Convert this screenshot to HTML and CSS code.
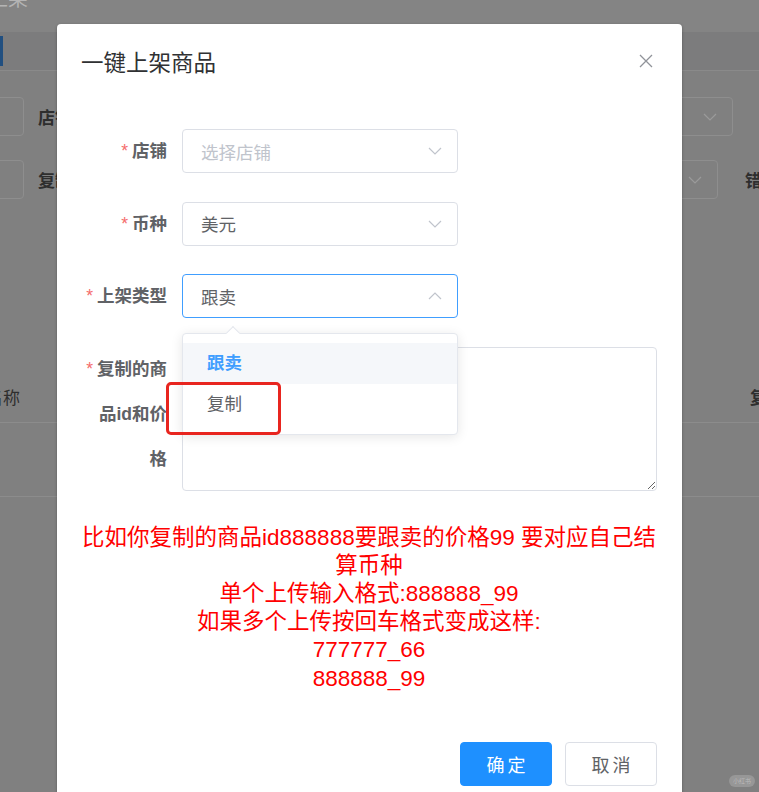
FILE: index.html
```html
<!DOCTYPE html>
<html lang="zh-CN">
<head>
<meta charset="utf-8">
<title>一键上架商品</title>
<link rel="stylesheet" href="styles.css">
</head>
<body>
<div class="page">
  <div class="bg">
    <div class="bg-title"><span class="bg-title-text">上架</span></div>
    <div class="bg-tabs"><span class="bg-tab-active"></span></div>
    <div class="bg-row bg-row1">
      <div class="bg-input"></div>
      <span class="bg-label">店铺</span>
      <div class="bg-select bg-select1">
        <svg class="chev" width="14" height="8" viewBox="0 0 14 8"><polyline points="1,1 7,7 13,1" fill="none" stroke="#9a9a9a" stroke-width="1.2"/></svg>
      </div>
    </div>
    <div class="bg-row bg-row2">
      <div class="bg-input"></div>
      <span class="bg-label">复制</span>
      <div class="bg-select bg-select2">
        <svg class="chev" width="14" height="8" viewBox="0 0 14 8"><polyline points="1,1 7,7 13,1" fill="none" stroke="#9a9a9a" stroke-width="1.2"/></svg>
      </div>
      <span class="bg-label bg-label-err">错误</span>
    </div>
    <div class="bg-table">
      <div class="bg-th"><span class="bg-th-name">名称</span><span class="bg-th-copy">复制</span></div>
      <div class="bg-tr"></div>
    </div>
  </div>

  <div class="modal">
    <div class="modal-header">
      <span class="modal-title">一键上架商品</span>
      <button class="modal-close" aria-label="关闭">
        <svg width="14" height="14" viewBox="0 0 14 14"><path d="M1 1 L13 13 M13 1 L1 13" stroke="#909399" stroke-width="1.3" fill="none"/></svg>
      </button>
    </div>
    <div class="modal-body">
      <div class="form-item">
        <label class="form-label required">店铺</label>
        <div class="select">
          <span class="placeholder">选择店铺</span>
          <svg class="arrow" width="14" height="8" viewBox="0 0 14 8"><polyline points="1,1 7,7 13,1" fill="none" stroke="#c0c4cc" stroke-width="1.2"/></svg>
        </div>
      </div>
      <div class="form-item">
        <label class="form-label required">币种</label>
        <div class="select">
          <span class="value">美元</span>
          <svg class="arrow" width="14" height="8" viewBox="0 0 14 8"><polyline points="1,1 7,7 13,1" fill="none" stroke="#c0c4cc" stroke-width="1.2"/></svg>
        </div>
      </div>
      <div class="form-item">
        <label class="form-label required">上架类型</label>
        <div class="select is-focus">
          <span class="value">跟卖</span>
          <svg class="arrow" width="14" height="8" viewBox="0 0 14 8"><polyline points="1,7 7,1 13,7" fill="none" stroke="#c0c4cc" stroke-width="1.2"/></svg>
          <div class="dropdown">
            <span class="dropdown-arrow"></span>
            <div class="option selected">跟卖</div>
            <div class="option">复制</div>
          </div>
        </div>
      </div>
      <div class="form-item form-item-last">
        <label class="form-label form-label-multi required">复制的商<br>品id和价<br>格</label>
        <textarea class="textarea"></textarea>
      </div>
      <div class="hint">
        比如你复制的商品id888888要跟卖的价格99 要对应自己结算币种<br>
        单个上传输入格式:888888_99<br>
        如果多个上传按回车格式变成这样:<br>
        777777_66<br>
        888888_99
      </div>
    </div>
    <div class="modal-footer">
      <button class="btn btn-primary">确定</button>
      <button class="btn btn-default">取消</button>
    </div>
    <div class="annotation"></div>
  </div>

  <div class="watermark">小红书</div>
</div>
</body>
</html>
```

FILE: styles.css
```css
* { box-sizing: border-box; }
html, body { margin: 0; padding: 0; }
body {
  width: 759px;
  height: 792px;
  overflow: hidden;
  font-family: "Liberation Sans", "Noto Sans CJK SC", sans-serif;
}
.page {
  position: relative;
  width: 759px;
  height: 792px;
  overflow: hidden;
  background: #808080;
}

/* ---------- background page (already dimmed) ---------- */
.bg { width: 759px; }
.bg-title {
  height: 32px;
  background: #848484;
  overflow: hidden;
}
.bg-title-text {
  display: block;
  margin: -14px 0 0 -12px;
  font-size: 20px;
  line-height: 26px;
  color: #b4b4b4;
}
.bg-tabs {
  height: 39px;
  background: #7c7c7d;
  border-bottom: 1px solid #8a8a8a;
  display: flex;
  align-items: center;
}
.bg-tab-active {
  width: 3px;
  height: 30px;
  background: #214f80;
}
.bg-row {
  display: flex;
  align-items: center;
  height: 39px;
  width: 900px;
}
.bg-row > * { flex: none; }
.bg-row1 { margin-top: 26px; }
.bg-row2 { margin-top: 24px; }
.bg-input {
  margin-left: -20px;
  width: 44px;
  height: 39px;
  border: 1px solid #8e8e8e;
  border-radius: 4px;
}
.bg-label {
  margin-left: 14px;
  width: 100px;
  font-size: 17px;
  font-weight: 700;
  color: #2e2e2e;
  white-space: nowrap;
}
.bg-select {
  height: 39px;
  border: 1px solid #8e8e8e;
  border-radius: 4px;
  display: flex;
  align-items: center;
  justify-content: flex-end;
  padding-right: 15px;
}
.bg-select1 { margin-left: 437px; width: 158px; }
.bg-select2 { margin-left: 422px; width: 158px; }
.bg-label-err { margin-left: 27px; }
.bg-table { margin-top: 171px; }
.bg-th {
  height: 53px;
  width: 900px;
  border-bottom: 1px solid #8c8c8c;
  display: flex;
  align-items: center;
  font-size: 17px;
  color: #2e2e2e;
  white-space: nowrap;
}
.bg-th > * { flex: none; }
.bg-th-name { margin-left: -14px; }
.bg-th-copy { margin-left: 730px; font-weight: 700; }
.bg-tr {
  height: 74px;
  border-bottom: 1px solid #8c8c8c;
}

/* ---------- modal ---------- */
.modal {
  position: absolute;
  left: 57px;
  top: 24px;
  width: 625px;
  height: 800px;
  background: #fff;
  border-radius: 4px;
  box-shadow: 0 1px 3px rgba(0, 0, 0, 0.3);
}
.modal-header {
  position: relative;
  padding: 25px 24px 0;
}
.modal-title {
  display: block;
  font-size: 22.5px;
  line-height: 30px;
  color: #303133;
}
.modal-close {
  position: absolute;
  right: 29px;
  top: 30px;
  width: 14px;
  height: 14px;
  padding: 0;
  border: 0;
  background: transparent;
  display: flex;
}
.modal-body {
  padding: 50px 25px 0 24px;
}
.form-item {
  display: flex;
  align-items: flex-start;
  margin-bottom: 28.5px;
}
.form-item-last { margin-bottom: 0; }
.form-label {
  width: 101px;
  flex: none;
  padding-right: 15px;
  text-align: right;
  font-size: 17.5px;
  font-weight: 700;
  line-height: 44px;
  color: #606266;
  white-space: nowrap;
}
.form-label-multi { line-height: 45px; }
.required::before {
  content: "*";
  color: #f56c6c;
  margin-right: 4px;
  font-weight: 400;
}
.select {
  position: relative;
  width: 276px;
  height: 44px;
  border: 1px solid #dcdfe6;
  border-radius: 4px;
  display: flex;
  align-items: center;
  padding: 0 15px 0 18px;
  font-size: 17.5px;
}
.select.is-focus { border-color: #409eff; }
.placeholder { color: #c0c4cc; flex: 1; }
.value { color: #606266; flex: 1; }
.arrow { flex: none; }

.dropdown {
  position: absolute;
  left: -1px;
  top: 58px;
  width: 276px;
  padding: 9px 0;
  background: #fff;
  border: 1px solid #e4e7ed;
  border-radius: 4px;
  box-shadow: 0 2px 12px rgba(0, 0, 0, 0.1);
  z-index: 5;
}
.dropdown-arrow {
  position: absolute;
  top: -6px;
  left: 45px;
  width: 10px;
  height: 10px;
  background: #fff;
  border-left: 1px solid #e4e7ed;
  border-top: 1px solid #e4e7ed;
  transform: rotate(45deg);
}
.option {
  height: 41px;
  line-height: 41px;
  padding: 0 24px;
  font-size: 17.5px;
  color: #606266;
}
.option.selected {
  background: #f5f7fa;
  color: #409eff;
  font-weight: 700;
}

.textarea {
  display: block;
  width: 475px;
  height: 144px;
  margin: 0;
  border: 1px solid #dcdfe6;
  border-radius: 4px;
  resize: both;
  font-family: inherit;
  outline: none;
}

.hint {
  margin: 33px -2px 0;
  text-align: center;
  color: #ff0000;
  font-size: 22.5px;
  line-height: 28.2px;
}

.modal-footer {
  display: flex;
  justify-content: flex-end;
  gap: 13px;
  padding: 49px 25px 0 0;
}
.btn {
  width: 92px;
  height: 44px;
  border-radius: 4px;
  font-family: inherit;
  font-size: 18px;
  letter-spacing: 3px;
  text-indent: 3px;
  padding: 0;
  cursor: pointer;
}
.btn-primary {
  background: #1e90ff;
  border: 1px solid #1e90ff;
  color: #fff;
}
.btn-default {
  background: #fff;
  border: 1px solid #dcdfe6;
  color: #606266;
}

.annotation {
  position: absolute;
  left: 109px;
  top: 358px;
  width: 115px;
  height: 53px;
  border: 3px solid #e8251f;
  border-radius: 5px;
  z-index: 10;
}

.watermark {
  position: absolute;
  right: 4px;
  bottom: 5px;
  width: 26px;
  height: 12px;
  border-radius: 6px;
  background: rgba(255, 255, 255, 0.18);
  color: rgba(255, 255, 255, 0.35);
  font-size: 6px;
  line-height: 12px;
  text-align: center;
}
```
